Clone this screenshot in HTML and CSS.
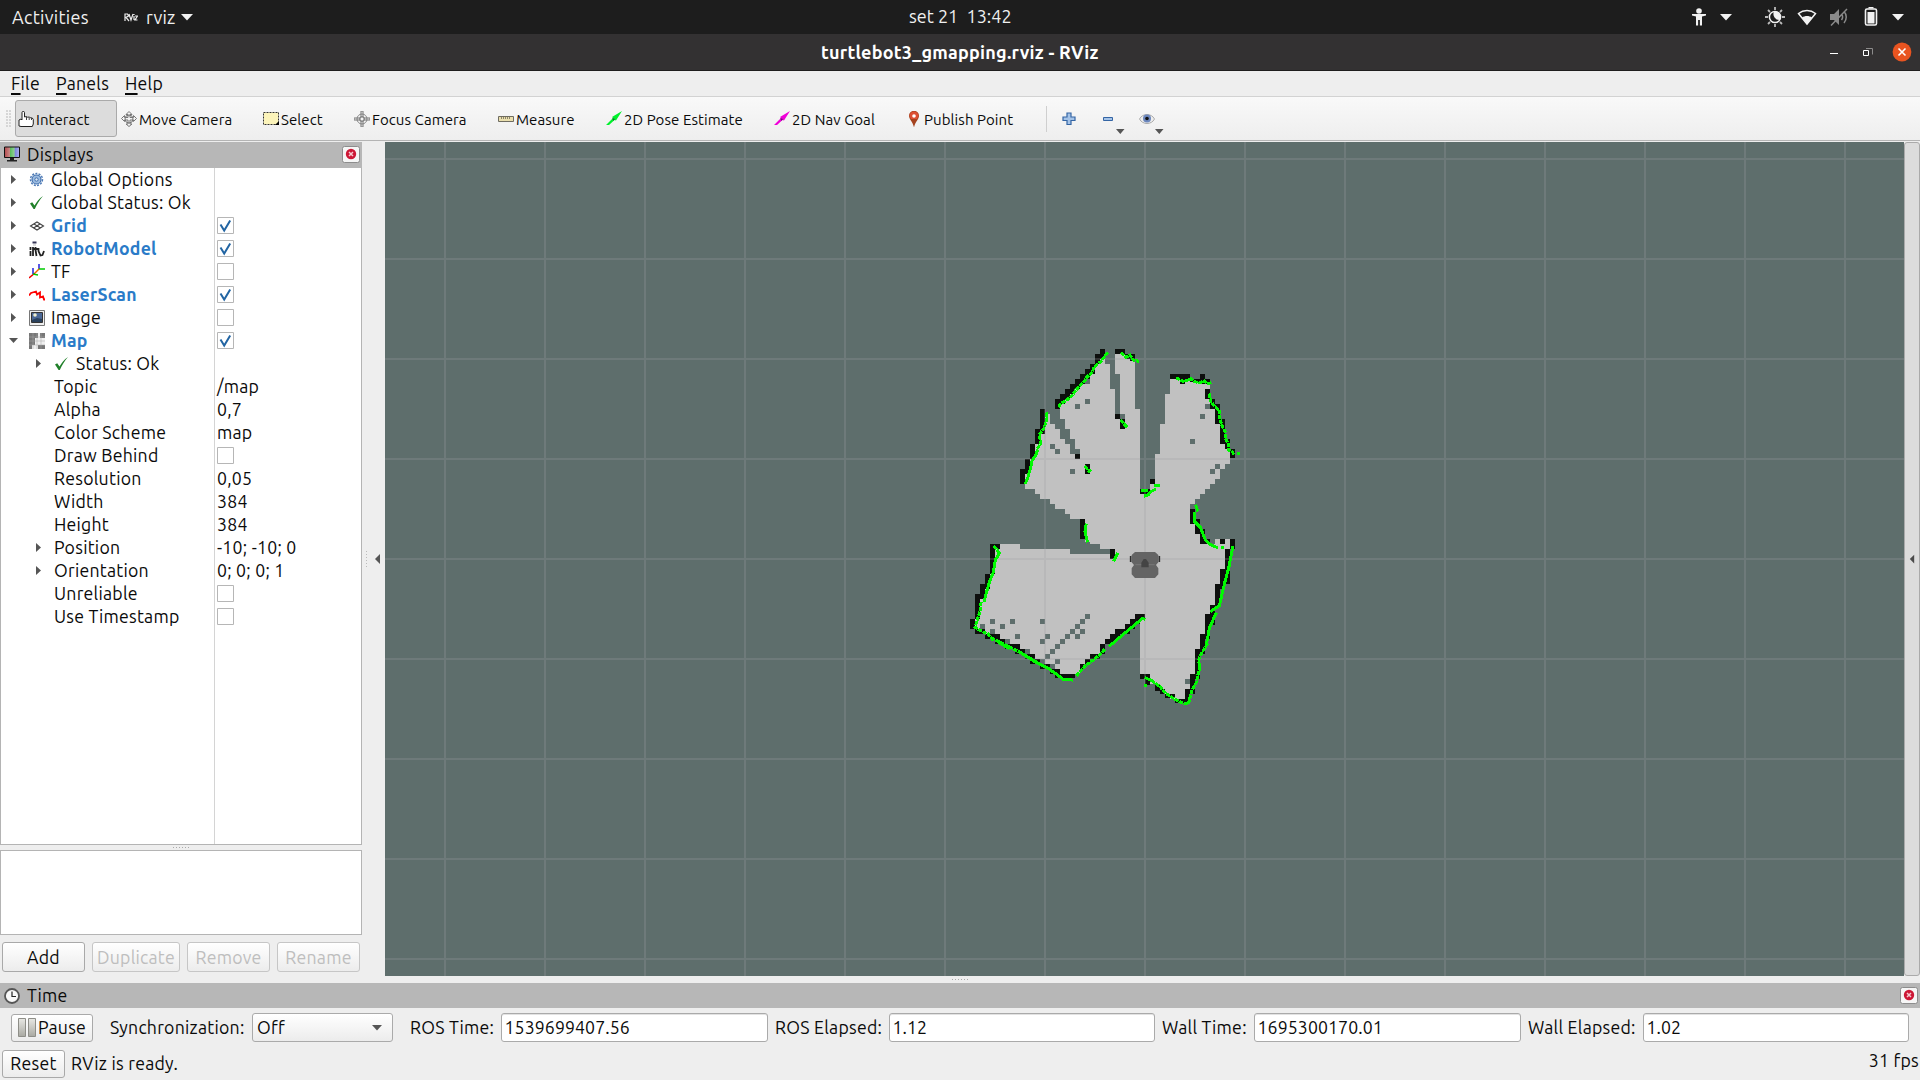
FILE: index.html
```html
<!DOCTYPE html>
<html lang="en">
<head>
<meta charset="utf-8">
<title>turtlebot3_gmapping.rviz - RViz</title>
<link rel="stylesheet" href="styles.css">
</head>
<body>
<svg class="defs" aria-hidden="true">
  <symbol id="check" viewBox="0 0 17 17"><path d="M.5.5h16v16H.5z" fill="#fff" stroke="#b6b6b6"/><path d="M3.500 7.500l3.700 6 6-10" fill="none" stroke="#2265a3" stroke-width="2"/></symbol>
  <symbol id="box" viewBox="0 0 17 17"><path d="M.5.5h16v16H.5z" fill="#fff" stroke="#b6b6b6"/></symbol>
  <symbol id="ok" viewBox="0 0 16 16"><path d="M1 8.500l2.200-1.200 2.300 3.300C8 6.500 10 3.500 14 1 10.500 5 8 9 5.800 14H4.600z" fill="#21802a"/></symbol>
  <symbol id="tri" viewBox="0 0 12 7"><path d="M0 0h12L6 6.600z" fill="#f2f2f2"/></symbol>
  <symbol id="close" viewBox="0 0 18 17"><rect x=".5" y=".5" width="17" height="16" rx="2" fill="#f6f6f6" stroke="#8d8d8d"/><circle cx="9" cy="8" r="5.200" fill="#cd1836"/><path d="M7 6l4 4m0-4l-4 4" stroke="#f5c9d0" stroke-width="1.500"/></symbol>
  <symbol id="arrow" viewBox="0 0 16 16"><path d="M0 14l7-7-1-1L16 0 10 9.500 8.500 9 3 14z"/><path d="M6 7l3 1-1.500 2z" fill="#123" opacity=".6"/></symbol>
</svg>

<header class="topbar">
  <span class="activities">Activities</span>
  <svg class="rvlogo" viewBox="0 0 14 9"><path d="M1 8V1h2.500L4.500 3 2 4.500 5 8M5 1l2 6 2-6M10 3v4m0-6v1m1 1h2.500L11 7h2.500" fill="none" stroke="#eee" stroke-width="1.200"/></svg>
  <span class="appname">rviz</span>
  <svg class="tri" viewBox="0 0 12 7"><use href="#tri"/></svg>
  <span class="clock">set 21&nbsp; 13:42</span>
  <svg class="tray" viewBox="0 0 220 34" fill="#f2f2f2">
    <circle cx="9" cy="11" r="2.800"/><path d="M2 14h14v1.600l-4 1V25.600H9.900V20H8.100v5.600H6V16.600l-4-1z"/>
    <path d="M30 14h12l-6 6.600zM202 14h12l-6 6.600z"/>
    <circle cx="85" cy="17" r="5.600" fill="none" stroke="#f2f2f2" stroke-width="1.500"/><path d="M84 11.500a5.800 5.800 0 0 1 6 8.500 6 6 0 0 1-6-8.500z"/>
    <path d="M85 7v3m0 14v3M75 17h3m14 0h3M78 10l2 2m10 10l2 2m0-14l-2 2m-10 10l-2 2" stroke="#bbb" stroke-width="1.800"/>
    <path d="M108.500 13.500c5-4 12-4 17 0L117 24z" fill="none" stroke="#f2f2f2" stroke-width="1.500"/><path d="M112 17.500c3-2 7-2 10 0L117 24.500z"/>
    <g fill="#8a8a8a"><path d="M140 14h4l5-5v16l-5-5h-4z"/><path d="M141 25.500L157 9M151.500 14c1.500 2 1.500 4 0 6m2.500-8.500c3 3 3 8 0 11.500" fill="none" stroke="#8a8a8a" stroke-width="1.500"/></g>
    <path d="M178.500 7h5v1.500h-5z"/><rect x="175.500" y="9" width="11" height="16" rx="1.500" fill="none" stroke="#f2f2f2" stroke-width="1.600"/><path d="M177.500 12h7v11.500h-7z"/>
  </svg>
</header>

<div class="titlebar">
  <span class="title">turtlebot3_gmapping.rviz - RViz</span>
  <svg class="winbtns" viewBox="0 0 84 36"><path d="M0 19.500h8" stroke="#fff"/><path d="M36 14.500h6.500v6" fill="none" stroke="#8c8b8b"/><path d="M34.500 16.500h5v5h-5z" transform="translate(-1 0)" fill="none" stroke="#fff"/><circle cx="72" cy="18" r="9.400" fill="#e95420"/><path d="M68.500 14.500l7 7m0-7l-7 7" stroke="#fff" stroke-width="1.600"/></svg>
</div>

<nav class="menubar">
  <span class="m-file"><u>F</u>ile</span><span class="m-panels"><u>P</u>anels</span><span class="m-help"><u>H</u>elp</span>
</nav>

<div class="toolbar">
  <i class="handle"></i>
  <div class="tool active t1"><svg viewBox="0 0 16 16"><path d="M1 15V9l2-1 1 1V1.500C4 0 6.500 0 6.500 1.500V6l2-.5 1 .7 2-.2.8.8 2 .2 1 1.500V13l-1 2.500H3z" fill="#fff" stroke="#222"/><path d="M8.500 6v3m2.700-2.700V9M13.500 7v2" stroke="#444"/></svg><span>Interact</span></div>
  <div class="tool t2"><svg viewBox="0 0 16 16"><g fill="none" stroke="#777"><path d="M8 .5l3 3H9v3h3.500V4.500l3 3-3 3V9H9v4h2l-3 2.500L5 13h2V9H3.500v1.500l-3-3 3-3V6.500H7v-3H5z"/><circle cx="8" cy="8" r="4"/></g></svg><span>Move Camera</span></div>
  <div class="tool t3"><svg viewBox="0 0 16 16"><path d="M.5 1.500h15v12H.5z" fill="#fcf4ba" stroke="#333" stroke-dasharray="2 1"/><path d="M16 10v4h-4z"/></svg><span>Select</span></div>
  <div class="tool t4"><svg viewBox="0 0 16 16"><g fill="none" stroke="#8a8a8a"><circle cx="8" cy="8" r="5"/><circle cx="8" cy="8" r="2.500"/><path d="M7 0v7H0v2h7v7h2V9h7V7H9V0z" stroke="#777"/></g></svg><span>Focus Camera</span></div>
  <div class="tool t5"><svg viewBox="0 0 16 16"><path d="M.5 5.500h15v5H.5z" fill="#eadfae" stroke="#6f6c60"/><path d="M3.500 6v2m2-2v2m2-2v2m2-2v2m2-2v2" stroke="#8c8569"/></svg><span>Measure</span></div>
  <div class="tool t6"><svg viewBox="0 0 16 16" fill="#00f02c"><use href="#arrow"/></svg><span>2D Pose Estimate</span></div>
  <div class="tool t7"><svg viewBox="0 0 16 16" fill="#f000d8"><use href="#arrow"/></svg><span>2D Nav Goal</span></div>
  <div class="tool t8"><svg viewBox="0 0 16 16"><path d="M8 16.500C7 11 3 8.500 3 4.800a5 5 0 0 1 10 0c0 3.700-4 6.200-5 11.700z" fill="#a5431f"/><path d="M3.500 5a4.500 4.500 0 0 1 9 0l-1.500 3h-6z" fill="#dd5034"/><circle cx="8" cy="5" r="1.800" fill="#fff"/></svg><span>Publish Point</span></div>
  <svg class="extras" viewBox="0 0 130 43"><path d="M4.500 9v26" stroke="#cfcfcf"/>
    <path d="M25.500 16.500h4v4h4v3.500h-4v4h-4v-4h-4v-3.500h4z" transform="translate(-.5 -.5)" fill="#a4c3e8" stroke="#3465a4" stroke-width="1.200"/>
    <path d="M61.500 20.500h9v3h-9z" fill="#a4c3e8" stroke="#3465a4"/>
    <path d="M74 32h8.500l-4.200 5zM113 32h8.500l-4.200 5z" fill="#555"/>
    <path d="M98 22c3-6 12-6 15 0-3 6-12 6-15 0z" transform="translate(-.5 0)" fill="#eee" stroke="#aaa"/><circle cx="105" cy="21.500" r="4" fill="#6c87bd"/><circle cx="105" cy="21.500" r="1.800" fill="#111"/></svg>
</div>

<main class="work">
  <aside class="dock">
    <div class="dockhead">
      <svg class="hicon" viewBox="0 0 16 16"><defs><linearGradient id="rgb"><stop offset="0" stop-color="#b5494e"/><stop offset=".35" stop-color="#c98a86"/><stop offset=".4" stop-color="#5ebf61"/><stop offset=".65" stop-color="#8fcf92"/><stop offset=".7" stop-color="#7a83dc"/><stop offset="1" stop-color="#aeb3ec"/></linearGradient></defs><path d="M.5 1h15v10.500H.5z" fill="url(#rgb)" stroke="#111"/><path d="M6 12h4v2h3v1.500H3V14h3z" fill="#222"/></svg>
      <span class="dname">Displays</span>
      <svg class="close" viewBox="0 0 18 17"><use href="#close"/></svg>
    </div>
    <div class="tree" id="tree"></div>
    <div class="split"><i></i></div>
    <div class="desc"></div>
    <div class="buttons">
      <button class="b-add">Add</button><button class="b-dup" disabled>Duplicate</button><button class="b-rem" disabled>Remove</button><button class="b-ren" disabled>Rename</button>
    </div>
  </aside>
  <div class="vsplit"><svg viewBox="0 0 23 20"><path d="M4.500 2v16" stroke="#bbb" stroke-dasharray="1 2"/><path d="M18 5v10l-5-5z" fill="#555"/></svg></div>
  <svg class="view" id="view" viewBox="385 142 1519 834"></svg>
  <div class="rsplit"><svg viewBox="0 0 16 12"><path d="M10.500 1v10l-5-5z" fill="#4a4a4a"/></svg></div>
</main>
<div class="hsplit"><i></i></div>

<section class="time">
  <div class="timehead">
    <svg class="hicon" viewBox="0 0 16 16"><circle cx="8" cy="8" r="7" fill="#f8f8f8" stroke="#555" stroke-width="1.800"/><path d="M8 3.500V8.500h4" fill="none" stroke="#222" stroke-width="1.200"/></svg>
    <span class="dname">Time</span>
    <svg class="close" viewBox="0 0 18 17"><use href="#close"/></svg>
  </div>
  <div class="timerow">
    <button class="pause"><svg viewBox="0 0 18 19"><defs><linearGradient id="bar" y2="1" x2="0"><stop stop-color="#e8e8e4"/><stop offset="1" stop-color="#a9a9a2"/></linearGradient></defs><path d="M.5.5h7v18h-7zM10.500.5h7v18h-7z" fill="url(#bar)" stroke="#8e8e88"/></svg><span>Pause</span></button>
    <label class="l-sync">Synchronization:</label>
    <div class="combo"><span>Off</span><svg viewBox="0 0 10 6"><path d="M0 0h10L5 5.500z" fill="#555"/></svg></div>
    <label class="l-ros">ROS Time:</label><div class="field f1">1539699407.56</div>
    <label class="l-rose">ROS Elapsed:</label><div class="field f2">1.12</div>
    <label class="l-wall">Wall Time:</label><div class="field f1">1695300170.01</div>
    <label class="l-walle">Wall Elapsed:</label><div class="field f2">1.02</div>
  </div>
  <div class="status"><button class="reset">Reset</button><span class="ready">RViz is ready.</span><span class="fps">31 fps</span></div>
</section>
<script src="app.js"></script>
</body>
</html>
```
FILE: styles.css
```css
*{box-sizing:border-box}
body{margin:0;width:1920px;height:1080px;overflow:hidden;background:#eee;color:#0a0a0a;font:17.7px/23px Ubuntu,"Open Sans","Noto Sans",sans-serif;letter-spacing:.24px;white-space:nowrap;display:flex;flex-direction:column}
svg{display:block;flex:none}
.defs{display:none}
.topbar{height:34px;background:#1d1d1d;color:#f0f0f0;display:flex;align-items:center;padding-left:12px;flex:none;font-size:18px}
.activities{width:112px;letter-spacing:.3px}
.rvlogo{width:14px;height:9px}
.appname{width:35px;margin-left:8px}
.tri{width:12px;height:7px}
.clock{margin-left:716px;width:781px;letter-spacing:0;padding-bottom:1px}
.tray{width:220px;height:34px}
.titlebar{height:37px;background:#333132;border-bottom:1px solid #1f1d1e;color:#fff;display:flex;align-items:center;flex:none;font-weight:700;font-size:18px}
.title{margin-left:821px;width:1013px;letter-spacing:.24px}
.winbtns{width:84px;height:36px;margin-left:-4px}
.menubar{height:26px;border-bottom:1px solid #d2d2d2;display:flex;align-items:center;padding-left:11px;flex:none}
.menubar u{text-decoration-thickness:2px;text-underline-offset:3px}
.m-file{width:45px}.m-panels{width:69px}
.toolbar{height:44px;background:linear-gradient(#f9f9f9,#eee);border-bottom:1px solid #b4b4b4;display:flex;align-items:center;padding-left:6px;font-size:15px;letter-spacing:.08px;flex:none}
.handle{width:5px;height:17px;margin-right:4px;background:radial-gradient(circle at 1px 1px,#ccc .6px,transparent 1px) 0 0/3px 3px}
.tool{display:flex;align-items:center;gap:2px;height:37px;padding-left:3px;flex:none}
.tool svg{width:16px;height:16px}
.tool span{padding-top:2px}
.active{background:#dcdcdc;border:1px solid #aaa;border-radius:3px;padding-left:2px}
.t1{width:102px;margin-right:1px}.t2{width:142px}.t3{width:91px}.t4{width:144px}.t5{width:108px}.t6{width:168px}.t7{width:132px}.t8{width:139px}
.extras{width:130px;height:43px}
.work{display:flex;height:834px;margin-top:1px;flex:none}
.dock{width:362px;display:flex;flex-direction:column}
.dockhead,.timehead{background:#b7b7b7;display:flex;align-items:center;padding-left:4px;flex:none}
.dockhead{height:26px;padding-bottom:2px}
.timehead{height:25px}
.hicon{width:16px;height:16px}
.dname{margin-left:7px;flex:1}
.close{width:18px;height:17px;margin-right:2px}
.tree{height:677px;border:1px solid #b4b4b4;border-top:0;background:linear-gradient(#d4d4d4,#d4d4d4) 213px 0/1px 100% no-repeat #fff}
.row{display:flex;align-items:center;height:23px;padding-left:8px}
.row span{padding-bottom:1px}
.child{padding-left:33px}
.exp{width:9px;height:9px;margin-right:11px}
.ico{width:16px;height:16px;margin-right:6px}
.name{flex:1}
.child .noicon{margin-left:0}
.val{width:144px}
.val svg{width:17px;height:17px}
.on{color:#2a7bc8;font-weight:700}
.split{height:5px;display:flex;justify-content:center;align-items:center}
.split i,.hsplit i{width:17px;height:1px;background:repeating-linear-gradient(90deg,#aaa 0 1px,transparent 1px 3px)}
.desc{height:85px;border:1px solid #b4b4b4;background:#fff}
.buttons{display:flex;gap:7px;padding:7px 0 0 2px}
button{font:inherit;letter-spacing:inherit;color:inherit;border:1px solid #a9a9a9;border-radius:3px;background:linear-gradient(#fff,#ececec);height:30px;padding:0;display:flex;align-items:center;justify-content:center}
button:disabled{color:#bebebe;border-color:#c6c6c6}
.b-add,.b-rem,.b-ren{width:83px}.b-dup{width:88px}
.vsplit{width:23px;display:flex;align-items:center}
.vsplit svg{width:23px;height:20px}
.view{width:1519px;height:834px}
.rsplit{width:16px;border:1px solid #aaa;border-radius:3px;background:#dcdcdc;display:flex;align-items:center}
.rsplit svg{width:14px;height:12px}
.hsplit{height:7px;display:flex;align-items:center;justify-content:center;flex:none}
.timerow{display:flex;align-items:center;height:39px;padding-left:11px}
.pause{width:82px;height:28px;gap:2px}
.pause svg{width:18px;height:19px}
.combo,.field{height:29px;border:1px solid #aaa;border-radius:3px;display:flex;align-items:center;flex:none}
.combo{width:141px;background:linear-gradient(#fff,#ececec);justify-content:space-between;padding:0 10px 0 4px}
.combo svg{width:10px;height:6px}
.field{background:#fff;padding-left:2.5px;letter-spacing:.1px;box-shadow:inset 0 1px #e2e2e2}
.f1{width:267px}.f2{width:266px}
.l-sync{margin-left:17px;width:142px}
.l-ros{margin-left:17px;width:91px}
.l-rose{margin-left:7px;width:114px}
.l-wall{margin-left:7px;width:92px}
.l-walle{margin-left:7px;width:115px}
.status{display:flex;align-items:center;height:33px;padding:0 2px}
.reset{width:63px;height:28px;margin-right:6px}
.ready{flex:1}
.fps{margin:-6px -1px 0 0}
```
FILE: app.js
```js
const icons = {
  gear: '<circle cx="7.500" cy="7.500" r="4.500" fill="#9dbce0" stroke="#3f6fae" stroke-width="1.200"/><circle cx="7.500" cy="7.500" r="6" fill="none" stroke="#4a78b5" stroke-width="1.400" stroke-dasharray="2 1.300"/><circle cx="7.500" cy="7.500" r="1.700" fill="#dde8f5" stroke="#3f6fae"/>',
  ok: '<use href="#ok"/>',
  grid: '<path d="M1.500 8L8 4l6.500 4L8 12zM5 6l6.500 4M11 6l-6.500 4" fill="none" stroke="#444" stroke-width="1.100"/>',
  robot: '<path d="M3.500 1.500h4" stroke="#335" stroke-width="2"/><path d="M4 4h3" stroke="#bbb"/><path d="M1.500 6v3M1.500 10v5M4 6v9M6.500 6v3l1 6M9.500 7v3l2 4.500 2-.5 1.500-4M4 8h6" fill="none" stroke="#222" stroke-width="1.800"/>',
  tf: '<path d="M0 14l6-5" stroke="#e00" stroke-width="1.500"/><path d="M4 10V4M10 5V0" stroke="#22d" stroke-width="1.500"/><path d="M4 10l5 1M10 5h6" stroke="#0c0" stroke-width="1.500"/><path d="M6 9l4-4" stroke="#e60" stroke-width="1.500"/>',
  laser: '<path d="M0 8.500l2-2.500 5-1.500 1 3 3-2v5l3-1 1 3h1" fill="none" stroke="#f00" stroke-width="1.800"/>',
  image: '<path d="M.5.5h15v15H.5z" fill="#eee" stroke="#777"/><path d="M2.500 2.500h11v10h-11z" fill="#4a6796" stroke="#333"/><path d="M3 10l5-2 5 1v3H3z" fill="#29405c"/><circle cx="6" cy="5" r="1.800" fill="#f0efd0"/>',
  map: '<path d="M0 0h16v16H0z" fill="#f0f0f0"/><path d="M0 0h9v5H6v7H0zM11 0h5v5h-5zM9 12h7v4H9zM0 12h3v4H0z" fill="#777"/><path d="M4 0v16M8 0v16M12 0v16M0 4h16M0 8h16M0 12h16" stroke="#aaa" stroke-width=".5"/>'
};

// level, expander, icon, label, value, highlighted
const rows = [
  [0, 'r', 'gear', 'Global Options', ''],
  [0, 'r', 'ok', 'Global Status: Ok', ''],
  [0, 'r', 'grid', 'Grid', true, 1],
  [0, 'r', 'robot', 'RobotModel', true, 1],
  [0, 'r', 'tf', 'TF', false],
  [0, 'r', 'laser', 'LaserScan', true, 1],
  [0, 'r', 'image', 'Image', false],
  [0, 'd', 'map', 'Map', true, 1],
  [1, 'r', 'ok', 'Status: Ok', ''],
  [1, '', '', 'Topic', '/map'],
  [1, '', '', 'Alpha', '0,7'],
  [1, '', '', 'Color Scheme', 'map'],
  [1, '', '', 'Draw Behind', false],
  [1, '', '', 'Resolution', '0,05'],
  [1, '', '', 'Width', '384'],
  [1, '', '', 'Height', '384'],
  [1, 'r', '', 'Position', '-10; -10; 0'],
  [1, 'r', '', 'Orientation', '0; 0; 0; 1'],
  [1, '', '', 'Unreliable', false],
  [1, '', '', 'Use Timestamp', false]
];
const expander = { r: '<path d="M2 0v9L7 4.500z" fill="#555"/>', d: '<path d="M0 2h9L4.500 7z" fill="#555"/>', '': '' };
document.getElementById('tree').innerHTML = rows.map(([level, exp, icon, label, value, on]) => {
  const v = typeof value === 'boolean'
    ? `<svg viewBox="0 0 17 17"><use href="#${value ? 'check' : 'box'}"/></svg>` : value;
  return `<div class="row${level ? ' child' : ''}"><svg class="exp" viewBox="0 0 9 9">${expander[exp]}</svg>` +
    (icon ? `<svg class="ico" viewBox="0 0 16 16">${icons[icon]}</svg>` : '') +
    `<span class="name${on ? ' on' : ''}${icon ? '' : ' noicon'}">${label}</span><span class="val">${v}</span></div>`;
}).join('');

// Occupancy map: three units per screen pixel, one cell is 15 units.
const free = [
  'M435 57V72H450V147H465V237H480V102H465V42H495V57H525V207H540V447H570V432H585V342H600V252H615V162H630V117H735V132H750V192H765V207H780V260H795V312H810V372H795V387H780V417H765V432H750V447H735V462H720V477H705V492H690V552H705V582H720V612H765V597H825V627H795V690H780V732H765V795H750V822H735V882H720V927H705V1002H690V1047H675V1085H660V1077H630V1062H600V1032H570V1017H555V1002H540V837H525V852H510V867H480V882H450V912H435V942H405V957H375V972H360V1002H285V987H255V972H240V957H210V942H195V927H150V912H120V897H90V882H60V867H45V777H60V732H75V702H90V642H105V612H180V627H330V642H450V657H465V627H420V612H390V606H375V537H330V522H315V507H285V492H270V477H240V462H225V447H195V387H210V357H225V312H240V267H255V222H270V252H285V267H300V297H315V312H330V342H345V327H330V297H315V267H315V237H300V192H315V177H330V162H345V147H360V132H375V117H390V102H405V72H420V57Z'
];
const wall = [
  [420,27,15,15],[405,42,30,15],[405,57,15,15],[390,72,15,30],[375,87,30,15],[360,102,30,15],[345,117,30,15],[330,132,30,15],[315,147,30,15],[300,162,30,15],[285,177,30,15],[285,192,15,15],
  [240,207,15,60],[225,267,30,15],[225,282,15,30],[210,312,15,45],[195,357,15,45],[180,387,15,45],
  [465,27,30,15],[495,42,30,15],[510,57,15,5],[465,222,15,15],[480,237,15,30],[345,342,15,15],[375,372,15,30],[570,417,15,15],[540,447,30,15],
  [630,102,60,15],[660,117,15,15],[690,117,30,10],[720,102,15,30],[735,117,15,15],[735,147,15,30],[750,177,15,30],[765,192,15,60],[780,237,15,75],[795,297,15,30],[810,327,15,26],
  [690,507,15,45],[705,537,15,45],[720,567,15,45],[735,597,15,15],[360,537,15,60],[450,627,15,30],
  [780,597,15,15],[810,597,15,30],[795,627,15,105],[780,687,15,60],[765,732,15,70],[750,795,15,60],[735,822,15,75],[720,882,15,60],[705,927,15,90],[690,1002,15,60],[675,1047,15,45],[645,1077,30,12],[615,1062,30,13],[600,1047,15,15],[585,1032,15,20],[555,1005,15,30],[540,1002,30,15],
  [90,612,30,15],[90,627,15,75],[75,702,15,45],[60,732,15,45],[45,762,15,75],[30,837,15,30],[45,867,30,15],[75,882,45,15],[105,897,30,15],[135,912,45,15],[165,927,30,15],[195,942,30,15],[210,957,30,15],[240,972,30,15],[270,987,30,15],[285,1002,60,13],
  [525,822,30,15],[510,837,30,15],[495,852,30,15],[465,867,45,15],[450,882,30,15],[435,897,30,15],[420,912,15,30],[390,942,30,15],[375,957,15,15],[360,972,15,15]
];
const unknown = [
  [375,117],[375,177],[345,192],[270,312],[285,327],[330,387],[720,222],[690,297],[735,192],[750,387],[765,372],[480,222],
  [300,237,15,60],[315,267,15,45],[330,297,15,45],[345,327],
  [90,837],[150,837],[240,837],[60,852],[120,852],[90,867],[165,882],[135,897],[375,822],[360,837],[345,852],[330,867],[360,867],[315,882],[345,882],[300,897],[285,912],[270,927],[255,942],[255,882],[240,897],[195,927],[240,957],[285,957],[270,972],[675,1017]
];
// Laser returns; the second entry turns a trace into separate points.
const scan = [
  ['440,41 430,54 422,65 404,79 396,97 380,112 374,122 360,137 345,154 335,168 318,182 304,190 292,205', 1],
  ['259,222 260,241 252,264 237,286 243,308 234,323 228,345', 1],
  ['228,345 216,362 212,385 206,402 203,415 197,428', 0],
  ['487,41 498,52 510,45 520,60 533,63', 1],
  ['485,244 494,254 504,264', 1],['377,382 389,392 381,401', 1],
  ['548,450 558,450', 0],['556,467 565,464 574,454 584,449', 0],['587,436 596,436', 0],
  ['652,115 669,124 682,121 692,116 702,125 720,128 732,123 742,131 753,128', 1],
  ['748,165 753,185 768,203 779,212 779,234 787,260 795,275 795,292 805,312 806,330 818,336 822,347', 1],
  ['835,340 836,340', 0],['708,498 712,510', 0],
  ['702,520 702,540 710,552 720,563', 0],
  ['704,545 720,560 736,600 750,613 770,622', 0],['787,622 788,622', 0],
  ['818,622 807,680 795,725 778,797 755,812', 0],
  ['767,822 748,865 740,910', 0],['740,915 720,948 716,960 719,985 713,1008 708,1030 696,1050 685,1092 665,1088 635,1072 615,1058 600,1040 575,1022', 1],
  ['575,1022 558,1014', 0],['556,1036 557,1036', 0],
  ['378,555 375,575 382,603', 0],['471,643 463,660', 0],
  ['104,622 116,636', 1],['118,640 106,660 100,697 88,727 80,755 73,782', 0],
  ['63,790 60,815 53,835 45,862 65,874 85,883 97,898', 1],
  ['97,895 180,937 230,967', 1],['120,910 145,924',0],['180,937 225,965 265,985 310,1018 335,1020', 0],
  ['352,1004 376,977 393,965 418,945 436,926', 1],
  ['450,917 485,887 520,858 548,835 552,837', 0]
];
const rect = ([x, y, w = 15, h = 15]) => `M${x} ${y}h${w}v${h}h${-w}z`;
let grid = '';
for (let x = 445; x < 1904; x += 100) grid += `M${x} 142V976`;
for (let y = 159; y < 976; y += 100) grid += `M385 ${y}H1904`;
document.getElementById('view').innerHTML =
  `<rect x="385" y="142" width="1519" height="834" fill="#5e6e6c"/>
  <g transform="translate(960 340) scale(.33333333)" shape-rendering="crispEdges">
    <path d="${free.join('')}" fill="#c1c1c1"/>
    <path d="${unknown.map(rect).join('')}" fill="#5e6e6c"/>
    <path d="${wall.map(rect).join('')}" fill="#0d0f0d"/></g>
  <path d="${grid}" stroke="#a0a0a4" stroke-opacity=".25" stroke-width="2"/>
  <g transform="translate(960 340) scale(.33333333)">
    <g fill="none" stroke="#00fa00" stroke-width="9" stroke-linecap="square" shape-rendering="crispEdges">
    ${scan.map(([p, d]) => `<polyline points="${p}"${d ? ' stroke-dasharray="4 11"' : ''}/>`).join('')}</g>
    <path d="M512 648v18m86-18v18" stroke="#303030" stroke-width="5"/>
    <path d="M525 636h60l10 9v22l-7 8 7 10v18l-10 11h-60l-10-11v-18l7-10-7-8v-22z" fill="#646464"/>
    <path d="M526 674h58" stroke="#777" stroke-width="3"/><path d="M544 682v-14l7-11h7l8 11v14z" fill="#444"/></g>`;
```
